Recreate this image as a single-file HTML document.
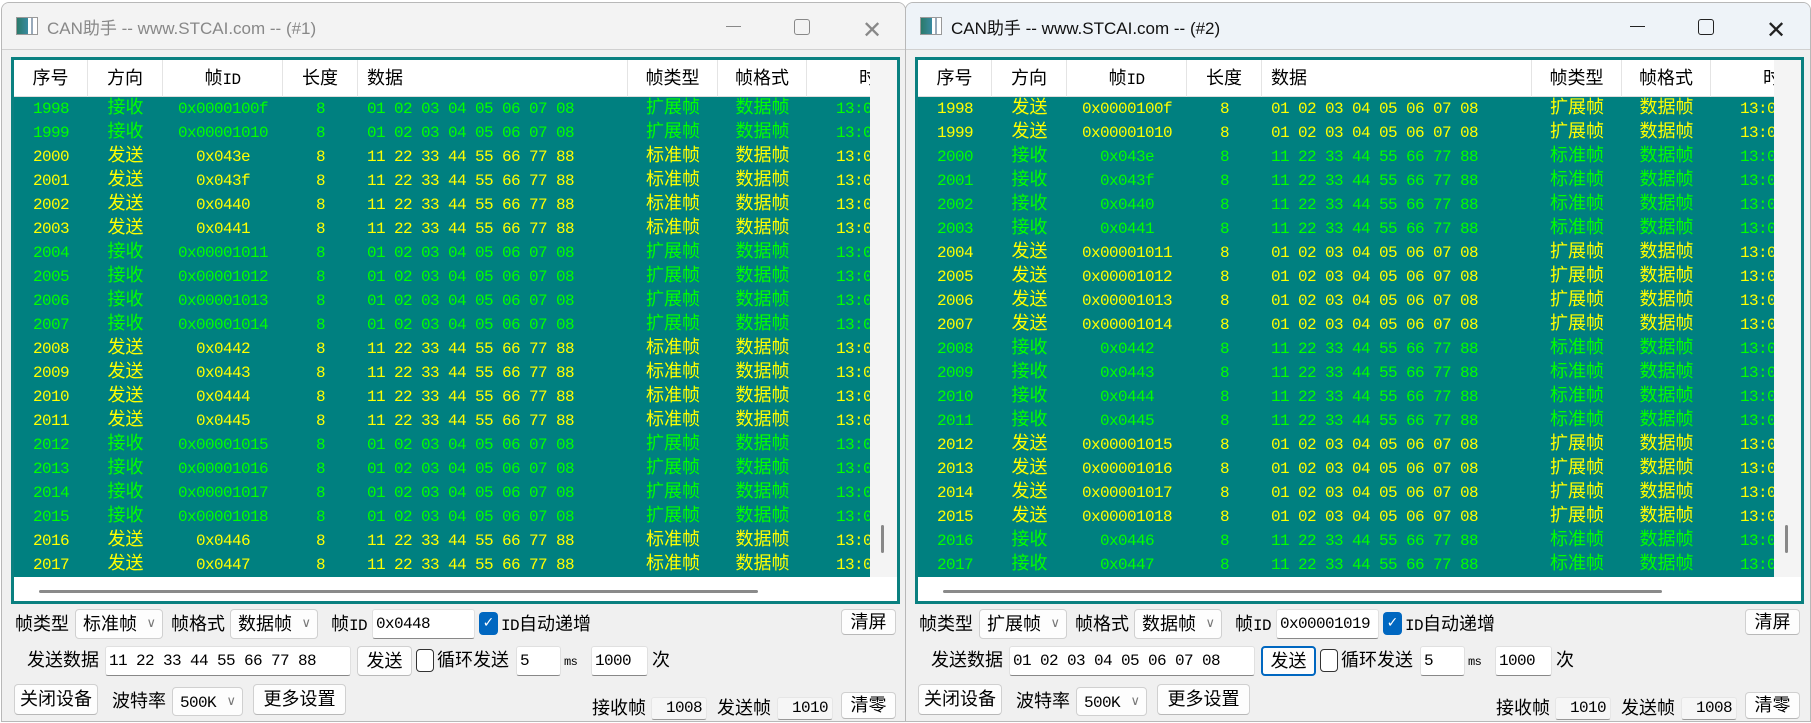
<!DOCTYPE html>
<html><head><meta charset="utf-8"><style>
*{margin:0;padding:0;box-sizing:border-box}
body{width:1811px;height:723px;background:#fff;position:relative;overflow:hidden;font-family:"Liberation Sans","Noto Sans CJK SC",sans-serif}
.win{position:absolute;top:2px;width:905px;height:720px;background:#f0f0f0;border:1px solid #b8b8b8;border-radius:8px 8px 0 0;overflow:hidden}
.tb{position:absolute;left:0;top:0;width:100%;height:47px;background:#f3f3f3;border-bottom:1px solid #d0d0d0}
.w2 .tb{background:#eef3f8}
.ico{position:absolute;left:14px;top:14px;width:22px;height:18px;border:1px solid #999;background:linear-gradient(90deg,#2a7a6a 0,#3a8aa0 55%,#fff 55%,#fff 70%,#9ab 70%,#9ab 80%,#fff 80%)}
.tt{position:absolute;left:45px;top:11px;font-size:17px;color:#888;white-space:nowrap}
.w2 .tt{color:#111}
.ctl{position:absolute;top:0}
.mn{position:absolute;left:724px;top:23px;width:15px;height:1px;background:#888}
.mx{position:absolute;left:792px;top:16px;width:16px;height:16px;border:1.5px solid #888;border-radius:3px}
.cx{position:absolute;left:860px;top:13px;font-size:24px;color:#888;font-family:"DejaVu Sans",sans-serif;font-weight:200}
.w2 .mn{background:#222}.w2 .mx{border-color:#222}.w2 .cx{color:#222}
.fr{position:absolute;left:9px;top:54px;width:889px;height:547px;border:3px solid #0a8080;background:#fff}
.hd{position:absolute;left:0;top:0;width:856px;height:37px;background:#fff;border-bottom:1px solid #ddd}
.hd i{position:absolute;top:0;height:37px;line-height:37px;font-style:normal;font-size:18px;color:#000;text-align:center;border-right:1px solid #e4e4e4}
.bd{position:absolute;left:0;top:37px;width:856px;height:480px;background:#008080;overflow:hidden}
.r{position:relative;height:24px;line-height:24px;font-family:"Liberation Mono","Noto Sans CJK SC",monospace;font-size:16px;letter-spacing:-0.6px;white-space:nowrap}
.r i{position:absolute;top:0;font-style:normal}
.g{color:#00ff00}.y{color:#ffff00}
.c1{left:0;width:74px;text-align:center}
.c2{left:74px;width:75px;text-align:center;font-size:18px;letter-spacing:0}
.c3{left:149px;width:120px;text-align:center}
.c4{left:269px;width:75px;text-align:center}
.c5{left:353px}
.c6{left:614px;width:90px;text-align:center;font-size:18px;letter-spacing:0}
.c7{left:704px;width:89px;text-align:center;font-size:18px;letter-spacing:0}
.c8{left:822px}
.vs{position:absolute;left:856px;top:0;width:27px;height:517px;background:#f4f4f4}
.vt{position:absolute;left:11px;top:465px;width:3px;height:28px;background:#888;border-radius:2px}
.hs{position:absolute;left:25px;top:530px;width:719px;height:3px;background:#8a8a8a;border-radius:2px}
.l{position:absolute;font-size:18px;color:#000;white-space:nowrap;line-height:24px}
.m{font-family:"Liberation Mono",monospace;font-size:16px;letter-spacing:-0.6px}
.bt{position:absolute;background:#fdfdfd;border:1px solid #d0d0d0;border-bottom-color:#b8b8b8;border-radius:4px;font-size:18px;text-align:center;white-space:nowrap}
.cb{position:absolute;background:#fdfdfd;border:1px solid #d0d0d0;border-radius:4px;font-size:18px;white-space:nowrap;padding-left:7px}
.cb b{position:absolute;right:6px;top:0;font-weight:normal;color:#777;font-size:13px;font-family:"DejaVu Sans",sans-serif}
.tx{position:absolute;background:#fff;border:1px solid #e0e0e0;border-bottom:1px solid #888;border-radius:3px;padding-left:3px;white-space:nowrap;font-family:"Liberation Mono",monospace;font-size:16px;letter-spacing:-0.6px;color:#000}
.ro{position:absolute;background:#f6f6f6;border:1px solid #e6e6e6;border-bottom:1px solid #999;border-radius:3px;text-align:right;padding-right:4px;font-family:"Liberation Mono",monospace;font-size:16px;letter-spacing:-0.6px;line-height:20px}
.ck{position:absolute;width:19px;height:23px;background:#0067c0;border-radius:4px;color:#fff;font-size:14px;text-align:center;line-height:23px;font-family:"DejaVu Sans",sans-serif}
.uk{position:absolute;width:18px;height:23px;border:1.5px solid #333;border-radius:4px;background:#fff}
</style></head><body>

<div class="win" style="left:1px">
<div class="tb"><div class="ico"></div><div class="tt">CAN助手 -- www.STCAI.com -- (#1)</div><div class="mn"></div><div class="mx"></div><div class="cx">✕</div></div>
<div class="fr">
<div class="hd"><i style="left:0;width:74px">序号</i><i style="left:74px;width:75px">方向</i><i style="left:149px;width:120px">帧<span class="m">ID</span></i><i style="left:269px;width:75px">长度</i><i style="left:344px;width:270px;text-align:left;padding-left:9px">数据</i><i style="left:614px;width:90px">帧类型</i><i style="left:704px;width:89px">帧格式</i><i style="left:793px;width:70px;text-align:right;border:0">时</i></div>
<div class="bd">
<div class="r g"><i class="c1">1998</i><i class="c2">接收</i><i class="c3">0x0000100f</i><i class="c4">8</i><i class="c5">01 02 03 04 05 06 07 08</i><i class="c6">扩展帧</i><i class="c7">数据帧</i><i class="c8">13:0</i></div>
<div class="r g"><i class="c1">1999</i><i class="c2">接收</i><i class="c3">0x00001010</i><i class="c4">8</i><i class="c5">01 02 03 04 05 06 07 08</i><i class="c6">扩展帧</i><i class="c7">数据帧</i><i class="c8">13:0</i></div>
<div class="r y"><i class="c1">2000</i><i class="c2">发送</i><i class="c3">0x043e</i><i class="c4">8</i><i class="c5">11 22 33 44 55 66 77 88</i><i class="c6">标准帧</i><i class="c7">数据帧</i><i class="c8">13:0</i></div>
<div class="r y"><i class="c1">2001</i><i class="c2">发送</i><i class="c3">0x043f</i><i class="c4">8</i><i class="c5">11 22 33 44 55 66 77 88</i><i class="c6">标准帧</i><i class="c7">数据帧</i><i class="c8">13:0</i></div>
<div class="r y"><i class="c1">2002</i><i class="c2">发送</i><i class="c3">0x0440</i><i class="c4">8</i><i class="c5">11 22 33 44 55 66 77 88</i><i class="c6">标准帧</i><i class="c7">数据帧</i><i class="c8">13:0</i></div>
<div class="r y"><i class="c1">2003</i><i class="c2">发送</i><i class="c3">0x0441</i><i class="c4">8</i><i class="c5">11 22 33 44 55 66 77 88</i><i class="c6">标准帧</i><i class="c7">数据帧</i><i class="c8">13:0</i></div>
<div class="r g"><i class="c1">2004</i><i class="c2">接收</i><i class="c3">0x00001011</i><i class="c4">8</i><i class="c5">01 02 03 04 05 06 07 08</i><i class="c6">扩展帧</i><i class="c7">数据帧</i><i class="c8">13:0</i></div>
<div class="r g"><i class="c1">2005</i><i class="c2">接收</i><i class="c3">0x00001012</i><i class="c4">8</i><i class="c5">01 02 03 04 05 06 07 08</i><i class="c6">扩展帧</i><i class="c7">数据帧</i><i class="c8">13:0</i></div>
<div class="r g"><i class="c1">2006</i><i class="c2">接收</i><i class="c3">0x00001013</i><i class="c4">8</i><i class="c5">01 02 03 04 05 06 07 08</i><i class="c6">扩展帧</i><i class="c7">数据帧</i><i class="c8">13:0</i></div>
<div class="r g"><i class="c1">2007</i><i class="c2">接收</i><i class="c3">0x00001014</i><i class="c4">8</i><i class="c5">01 02 03 04 05 06 07 08</i><i class="c6">扩展帧</i><i class="c7">数据帧</i><i class="c8">13:0</i></div>
<div class="r y"><i class="c1">2008</i><i class="c2">发送</i><i class="c3">0x0442</i><i class="c4">8</i><i class="c5">11 22 33 44 55 66 77 88</i><i class="c6">标准帧</i><i class="c7">数据帧</i><i class="c8">13:0</i></div>
<div class="r y"><i class="c1">2009</i><i class="c2">发送</i><i class="c3">0x0443</i><i class="c4">8</i><i class="c5">11 22 33 44 55 66 77 88</i><i class="c6">标准帧</i><i class="c7">数据帧</i><i class="c8">13:0</i></div>
<div class="r y"><i class="c1">2010</i><i class="c2">发送</i><i class="c3">0x0444</i><i class="c4">8</i><i class="c5">11 22 33 44 55 66 77 88</i><i class="c6">标准帧</i><i class="c7">数据帧</i><i class="c8">13:0</i></div>
<div class="r y"><i class="c1">2011</i><i class="c2">发送</i><i class="c3">0x0445</i><i class="c4">8</i><i class="c5">11 22 33 44 55 66 77 88</i><i class="c6">标准帧</i><i class="c7">数据帧</i><i class="c8">13:0</i></div>
<div class="r g"><i class="c1">2012</i><i class="c2">接收</i><i class="c3">0x00001015</i><i class="c4">8</i><i class="c5">01 02 03 04 05 06 07 08</i><i class="c6">扩展帧</i><i class="c7">数据帧</i><i class="c8">13:0</i></div>
<div class="r g"><i class="c1">2013</i><i class="c2">接收</i><i class="c3">0x00001016</i><i class="c4">8</i><i class="c5">01 02 03 04 05 06 07 08</i><i class="c6">扩展帧</i><i class="c7">数据帧</i><i class="c8">13:0</i></div>
<div class="r g"><i class="c1">2014</i><i class="c2">接收</i><i class="c3">0x00001017</i><i class="c4">8</i><i class="c5">01 02 03 04 05 06 07 08</i><i class="c6">扩展帧</i><i class="c7">数据帧</i><i class="c8">13:0</i></div>
<div class="r g"><i class="c1">2015</i><i class="c2">接收</i><i class="c3">0x00001018</i><i class="c4">8</i><i class="c5">01 02 03 04 05 06 07 08</i><i class="c6">扩展帧</i><i class="c7">数据帧</i><i class="c8">13:0</i></div>
<div class="r y"><i class="c1">2016</i><i class="c2">发送</i><i class="c3">0x0446</i><i class="c4">8</i><i class="c5">11 22 33 44 55 66 77 88</i><i class="c6">标准帧</i><i class="c7">数据帧</i><i class="c8">13:0</i></div>
<div class="r y"><i class="c1">2017</i><i class="c2">发送</i><i class="c3">0x0447</i><i class="c4">8</i><i class="c5">11 22 33 44 55 66 77 88</i><i class="c6">标准帧</i><i class="c7">数据帧</i><i class="c8">13:0</i></div>
</div>
<div class="vs"><div class="vt"></div></div>
<div class="hs"></div>
</div>
<div class="l" style="left:13px;top:609px">帧类型</div>
<div class="cb" style="left:73px;top:606px;width:88px;height:30px;line-height:28px">标准帧<b>∨</b></div>
<div class="l" style="left:169px;top:609px">帧格式</div>
<div class="cb" style="left:228px;top:606px;width:88px;height:30px;line-height:28px">数据帧<b>∨</b></div>
<div class="l" style="left:329px;top:609px">帧<span class="m">ID</span></div>
<div class="tx" style="left:370px;top:606px;width:103px;height:30px;line-height:28px">0x0448</div>
<div class="ck" style="left:477px;top:609px">✓</div>
<div class="l" style="left:499px;top:609px"><span class="m">ID</span>自动递增</div>
<div class="bt" style="left:839px;top:606px;width:55px;height:26px;line-height:24px">清屏</div>
<div class="l" style="left:25px;top:645px">发送数据</div>
<div class="tx" style="left:103px;top:643px;width:246px;height:30px;line-height:28px">11 22 33 44 55 66 77 88</div>
<div class="bt" style="left:355px;top:643px;width:55px;height:30px;line-height:28px">发送</div>
<div class="uk" style="left:414px;top:646px"></div>
<div class="l" style="left:435px;top:645px">循环发送</div>
<div class="tx" style="left:514px;top:643px;width:45px;height:30px;line-height:28px">5</div>
<div class="l m" style="left:562px;top:647px;font-size:12px">ms</div>
<div class="tx" style="left:589px;top:643px;width:57px;height:30px;line-height:28px">1000</div>
<div class="l" style="left:650px;top:645px">次</div>
<div class="bt" style="left:12px;top:681px;width:84px;height:31px;line-height:29px">关闭设备</div>
<div class="l" style="left:110px;top:686px">波特率</div>
<div class="cb" style="left:170px;top:684px;width:71px;height:29px;line-height:27px"><span class="m">500K</span><b>∨</b></div>
<div class="bt" style="left:251px;top:681px;width:93px;height:31px;line-height:29px">更多设置</div>
<div class="l" style="left:590px;top:693px">接收帧</div>
<div class="ro" style="left:649px;top:694px;width:56px;height:23px">1008</div>
<div class="l" style="left:715px;top:693px">发送帧</div>
<div class="ro" style="left:775px;top:694px;width:56px;height:23px">1010</div>
<div class="bt" style="left:839px;top:689px;width:55px;height:27px;line-height:25px">清零</div>
</div>

<div class="win w2" style="left:905px;width:906px">
<div class="tb"><div class="ico"></div><div class="tt">CAN助手 -- www.STCAI.com -- (#2)</div><div class="mn"></div><div class="mx"></div><div class="cx">✕</div></div>
<div class="fr">
<div class="hd"><i style="left:0;width:74px">序号</i><i style="left:74px;width:75px">方向</i><i style="left:149px;width:120px">帧<span class="m">ID</span></i><i style="left:269px;width:75px">长度</i><i style="left:344px;width:270px;text-align:left;padding-left:9px">数据</i><i style="left:614px;width:90px">帧类型</i><i style="left:704px;width:89px">帧格式</i><i style="left:793px;width:70px;text-align:right;border:0">时</i></div>
<div class="bd">
<div class="r y"><i class="c1">1998</i><i class="c2">发送</i><i class="c3">0x0000100f</i><i class="c4">8</i><i class="c5">01 02 03 04 05 06 07 08</i><i class="c6">扩展帧</i><i class="c7">数据帧</i><i class="c8">13:0</i></div>
<div class="r y"><i class="c1">1999</i><i class="c2">发送</i><i class="c3">0x00001010</i><i class="c4">8</i><i class="c5">01 02 03 04 05 06 07 08</i><i class="c6">扩展帧</i><i class="c7">数据帧</i><i class="c8">13:0</i></div>
<div class="r g"><i class="c1">2000</i><i class="c2">接收</i><i class="c3">0x043e</i><i class="c4">8</i><i class="c5">11 22 33 44 55 66 77 88</i><i class="c6">标准帧</i><i class="c7">数据帧</i><i class="c8">13:0</i></div>
<div class="r g"><i class="c1">2001</i><i class="c2">接收</i><i class="c3">0x043f</i><i class="c4">8</i><i class="c5">11 22 33 44 55 66 77 88</i><i class="c6">标准帧</i><i class="c7">数据帧</i><i class="c8">13:0</i></div>
<div class="r g"><i class="c1">2002</i><i class="c2">接收</i><i class="c3">0x0440</i><i class="c4">8</i><i class="c5">11 22 33 44 55 66 77 88</i><i class="c6">标准帧</i><i class="c7">数据帧</i><i class="c8">13:0</i></div>
<div class="r g"><i class="c1">2003</i><i class="c2">接收</i><i class="c3">0x0441</i><i class="c4">8</i><i class="c5">11 22 33 44 55 66 77 88</i><i class="c6">标准帧</i><i class="c7">数据帧</i><i class="c8">13:0</i></div>
<div class="r y"><i class="c1">2004</i><i class="c2">发送</i><i class="c3">0x00001011</i><i class="c4">8</i><i class="c5">01 02 03 04 05 06 07 08</i><i class="c6">扩展帧</i><i class="c7">数据帧</i><i class="c8">13:0</i></div>
<div class="r y"><i class="c1">2005</i><i class="c2">发送</i><i class="c3">0x00001012</i><i class="c4">8</i><i class="c5">01 02 03 04 05 06 07 08</i><i class="c6">扩展帧</i><i class="c7">数据帧</i><i class="c8">13:0</i></div>
<div class="r y"><i class="c1">2006</i><i class="c2">发送</i><i class="c3">0x00001013</i><i class="c4">8</i><i class="c5">01 02 03 04 05 06 07 08</i><i class="c6">扩展帧</i><i class="c7">数据帧</i><i class="c8">13:0</i></div>
<div class="r y"><i class="c1">2007</i><i class="c2">发送</i><i class="c3">0x00001014</i><i class="c4">8</i><i class="c5">01 02 03 04 05 06 07 08</i><i class="c6">扩展帧</i><i class="c7">数据帧</i><i class="c8">13:0</i></div>
<div class="r g"><i class="c1">2008</i><i class="c2">接收</i><i class="c3">0x0442</i><i class="c4">8</i><i class="c5">11 22 33 44 55 66 77 88</i><i class="c6">标准帧</i><i class="c7">数据帧</i><i class="c8">13:0</i></div>
<div class="r g"><i class="c1">2009</i><i class="c2">接收</i><i class="c3">0x0443</i><i class="c4">8</i><i class="c5">11 22 33 44 55 66 77 88</i><i class="c6">标准帧</i><i class="c7">数据帧</i><i class="c8">13:0</i></div>
<div class="r g"><i class="c1">2010</i><i class="c2">接收</i><i class="c3">0x0444</i><i class="c4">8</i><i class="c5">11 22 33 44 55 66 77 88</i><i class="c6">标准帧</i><i class="c7">数据帧</i><i class="c8">13:0</i></div>
<div class="r g"><i class="c1">2011</i><i class="c2">接收</i><i class="c3">0x0445</i><i class="c4">8</i><i class="c5">11 22 33 44 55 66 77 88</i><i class="c6">标准帧</i><i class="c7">数据帧</i><i class="c8">13:0</i></div>
<div class="r y"><i class="c1">2012</i><i class="c2">发送</i><i class="c3">0x00001015</i><i class="c4">8</i><i class="c5">01 02 03 04 05 06 07 08</i><i class="c6">扩展帧</i><i class="c7">数据帧</i><i class="c8">13:0</i></div>
<div class="r y"><i class="c1">2013</i><i class="c2">发送</i><i class="c3">0x00001016</i><i class="c4">8</i><i class="c5">01 02 03 04 05 06 07 08</i><i class="c6">扩展帧</i><i class="c7">数据帧</i><i class="c8">13:0</i></div>
<div class="r y"><i class="c1">2014</i><i class="c2">发送</i><i class="c3">0x00001017</i><i class="c4">8</i><i class="c5">01 02 03 04 05 06 07 08</i><i class="c6">扩展帧</i><i class="c7">数据帧</i><i class="c8">13:0</i></div>
<div class="r y"><i class="c1">2015</i><i class="c2">发送</i><i class="c3">0x00001018</i><i class="c4">8</i><i class="c5">01 02 03 04 05 06 07 08</i><i class="c6">扩展帧</i><i class="c7">数据帧</i><i class="c8">13:0</i></div>
<div class="r g"><i class="c1">2016</i><i class="c2">接收</i><i class="c3">0x0446</i><i class="c4">8</i><i class="c5">11 22 33 44 55 66 77 88</i><i class="c6">标准帧</i><i class="c7">数据帧</i><i class="c8">13:0</i></div>
<div class="r g"><i class="c1">2017</i><i class="c2">接收</i><i class="c3">0x0447</i><i class="c4">8</i><i class="c5">11 22 33 44 55 66 77 88</i><i class="c6">标准帧</i><i class="c7">数据帧</i><i class="c8">13:0</i></div>
</div>
<div class="vs"><div class="vt"></div></div>
<div class="hs"></div>
</div>
<div class="l" style="left:13px;top:609px">帧类型</div>
<div class="cb" style="left:73px;top:606px;width:88px;height:30px;line-height:28px">扩展帧<b>∨</b></div>
<div class="l" style="left:169px;top:609px">帧格式</div>
<div class="cb" style="left:228px;top:606px;width:88px;height:30px;line-height:28px">数据帧<b>∨</b></div>
<div class="l" style="left:329px;top:609px">帧<span class="m">ID</span></div>
<div class="tx" style="left:370px;top:606px;width:103px;height:30px;line-height:28px">0x00001019</div>
<div class="ck" style="left:477px;top:609px">✓</div>
<div class="l" style="left:499px;top:609px"><span class="m">ID</span>自动递增</div>
<div class="bt" style="left:839px;top:606px;width:55px;height:26px;line-height:24px">清屏</div>
<div class="l" style="left:25px;top:645px">发送数据</div>
<div class="tx" style="left:103px;top:643px;width:246px;height:30px;line-height:28px">01 02 03 04 05 06 07 08</div>
<div class="bt" style="left:355px;top:643px;width:55px;height:30px;line-height:26px;border:2px solid #0067c0">发送</div>
<div class="uk" style="left:414px;top:646px"></div>
<div class="l" style="left:435px;top:645px">循环发送</div>
<div class="tx" style="left:514px;top:643px;width:45px;height:30px;line-height:28px">5</div>
<div class="l m" style="left:562px;top:647px;font-size:12px">ms</div>
<div class="tx" style="left:589px;top:643px;width:57px;height:30px;line-height:28px">1000</div>
<div class="l" style="left:650px;top:645px">次</div>
<div class="bt" style="left:12px;top:681px;width:84px;height:31px;line-height:29px">关闭设备</div>
<div class="l" style="left:110px;top:686px">波特率</div>
<div class="cb" style="left:170px;top:684px;width:71px;height:29px;line-height:27px"><span class="m">500K</span><b>∨</b></div>
<div class="bt" style="left:251px;top:681px;width:93px;height:31px;line-height:29px">更多设置</div>
<div class="l" style="left:590px;top:693px">接收帧</div>
<div class="ro" style="left:649px;top:694px;width:56px;height:23px">1010</div>
<div class="l" style="left:715px;top:693px">发送帧</div>
<div class="ro" style="left:775px;top:694px;width:56px;height:23px">1008</div>
<div class="bt" style="left:839px;top:689px;width:55px;height:27px;line-height:25px">清零</div>
</div>
</body></html>
